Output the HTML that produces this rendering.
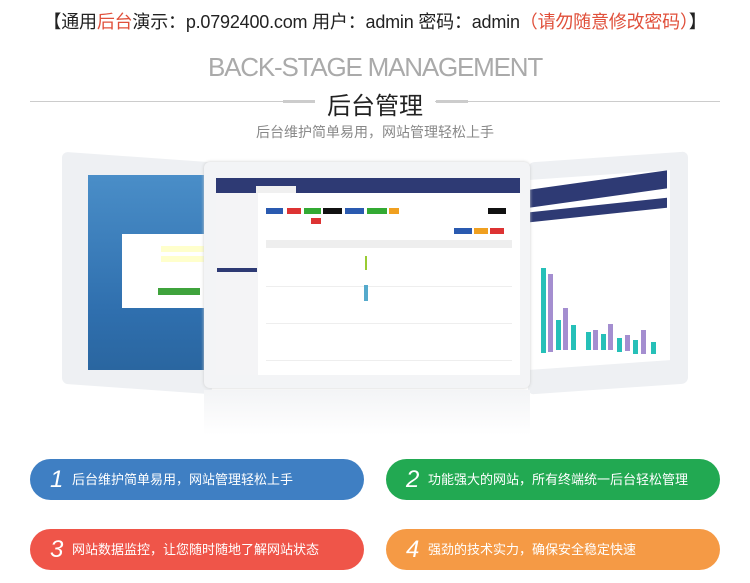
<!DOCTYPE html><html><head><meta charset="utf-8"><style>
body{margin:0;width:750px;height:583px;background:#fff;overflow:hidden;position:relative;font-family:"Liberation Sans","Noto Sans CJK SC",sans-serif}
.a{position:absolute}
.pill{position:absolute;height:41px;border-radius:21px;color:#fff;font-size:13px;line-height:41px;width:334px}
.pill b{font-style:italic;font-size:24px;font-weight:normal;display:inline-block;width:18px;margin-left:20px;margin-right:4px;vertical-align:top}
.row{position:absolute;left:48px;width:258px;height:37px;border-bottom:1px solid #eee;font-size:4px;color:#555}
</style></head><body>
<div class="a" style="left:0;top:8px;width:750px;text-align:center;font-size:18px;color:#222;letter-spacing:-0.2px">【通用<span style="color:#e0503b">后台</span>演示：p.0792400.com 用户：admin 密码：admin<span style="color:#e0503b">（请勿随意修改密码）</span>】</div>
<div class="a" style="left:0;top:52px;width:750px;text-align:center;font-size:26px;color:#aaa;letter-spacing:-1.2px">BACK-STAGE MANAGEMENT</div>
<div class="a" style="left:30px;top:101px;width:690px;height:1px;background:#ccc"></div>
<div class="a" style="left:283px;top:100px;width:32px;height:3px;background:#ccc"></div>
<div class="a" style="left:436px;top:100px;width:32px;height:3px;background:#ccc"></div>
<div class="a" style="left:315px;top:86px;width:120px;background:#fff;text-align:center;font-size:24px;color:#222">后台管理</div>
<div class="a" style="left:0;top:122px;width:750px;text-align:center;font-size:14px;color:#888">后台维护简单易用，网站管理轻松上手</div>

<!-- left screen -->
<div class="a" style="left:62px;top:157px;width:150px;height:232px;background:#eef0f3;border-radius:6px;transform:skewY(4deg)"></div>
<div class="a" style="left:88px;top:175px;width:122px;height:195px;background:linear-gradient(#4a8ec8,#2f6fae 70%,#2a66a0)"></div>
<div class="a" style="left:122px;top:234px;width:90px;height:74px;background:#fff"></div>
<div class="a" style="left:161px;top:246px;width:50px;height:6px;background:#ffffcc"></div>
<div class="a" style="left:161px;top:256px;width:50px;height:6px;background:#ffffcc"></div>
<div class="a" style="left:158px;top:288px;width:42px;height:7px;background:#3fa33c"></div>
<!-- right screen -->
<div class="a" style="left:528px;top:157px;width:160px;height:232px;background:#eef0f3;border-radius:6px;transform:skewY(-4deg)"></div>
<div class="a" style="left:530px;top:175px;width:140px;height:190px;background:#fff;transform:skewY(-4deg)"></div>
<div class="a" style="left:530px;top:180px;width:137px;height:18px;background:#2e3a74;transform:skewY(-8deg)"></div>
<div class="a" style="left:530px;top:205px;width:137px;height:10px;background:#2e3a74;transform:skewY(-6deg)"></div>
<svg class="a" style="left:535px;top:250px" width="135" height="110"><g fill="#26c0b8"><rect x="6" y="18" width="5" height="85"/><rect x="21" y="70" width="5" height="30"/><rect x="36" y="75" width="5" height="25"/><rect x="51" y="82" width="5" height="18"/><rect x="66" y="84" width="5" height="16"/><rect x="82" y="88" width="5" height="14"/><rect x="98" y="90" width="5" height="14"/><rect x="116" y="92" width="5" height="12"/></g><g fill="#a48ed0"><rect x="13" y="24" width="5" height="78"/><rect x="28" y="58" width="5" height="42"/><rect x="58" y="80" width="5" height="20"/><rect x="73" y="74" width="5" height="26"/><rect x="90" y="85" width="5" height="16"/><rect x="106" y="80" width="5" height="24"/></g></svg>
<!-- center screen -->
<div class="a" style="left:204px;top:162px;width:326px;height:226px;background:#f3f4f6;border-radius:6px;box-shadow:0 0 3px #ccc"></div>
<div class="a" style="left:216px;top:178px;width:304px;height:197px;background:#fff"></div>
<div class="a" style="left:216px;top:178px;width:304px;height:15px;background:#2e3a74"></div>
<div class="a" style="left:256px;top:186px;width:40px;height:7px;background:#f0f0f0"></div>
<div class="a" style="left:216px;top:193px;width:42px;height:182px;background:#f4f4f6"></div>
<div class="a" style="left:217px;top:268px;width:40px;height:4px;background:#2e3a74"></div>
<div class="a" style="left:266px;top:208px;width:17px;height:6px;background:#2a5ab0"></div>
<div class="a" style="left:287px;top:208px;width:14px;height:6px;background:#d33"></div>
<div class="a" style="left:304px;top:208px;width:17px;height:6px;background:#3a3"></div>
<div class="a" style="left:323px;top:208px;width:19px;height:6px;background:#111"></div>
<div class="a" style="left:345px;top:208px;width:19px;height:6px;background:#2a5ab0"></div>
<div class="a" style="left:367px;top:208px;width:20px;height:6px;background:#3a3"></div>
<div class="a" style="left:389px;top:208px;width:10px;height:6px;background:#f0a020"></div>
<div class="a" style="left:488px;top:208px;width:18px;height:6px;background:#111"></div>
<div class="a" style="left:311px;top:218px;width:10px;height:6px;background:#d33"></div>
<div class="a" style="left:454px;top:228px;width:18px;height:6px;background:#2a5ab0"></div>
<div class="a" style="left:474px;top:228px;width:14px;height:6px;background:#f0a020"></div>
<div class="a" style="left:490px;top:228px;width:14px;height:6px;background:#d33"></div>
<div class="a" style="left:266px;top:240px;width:246px;height:8px;background:#eee"></div>
<div class="row" style="left:266px;top:249px;width:246px"></div>
<div class="row" style="left:266px;top:286px;width:246px"></div>
<div class="row" style="left:266px;top:323px;width:246px"></div>
<div class="row" style="left:266px;top:345px;width:246px;border:0"></div>
<div class="a" style="left:365px;top:256px;width:2px;height:14px;background:#9c3"></div>
<div class="a" style="left:364px;top:285px;width:4px;height:16px;background:#5ac"></div>
<!-- reflection -->
<div class="a" style="left:204px;top:390px;width:326px;height:45px;background:linear-gradient(#f3f4f6,#fff)"></div>

<div class="pill" style="left:30px;top:459px;background:#3f7fc3"><b>1</b>后台维护简单易用，网站管理轻松上手</div>
<div class="pill" style="left:386px;top:459px;background:#22a952"><b>2</b>功能强大的网站，所有终端统一后台轻松管理</div>
<div class="pill" style="left:30px;top:529px;background:#ef5549"><b>3</b>网站数据监控，让您随时随地了解网站状态</div>
<div class="pill" style="left:386px;top:529px;background:#f59a45"><b>4</b>强劲的技术实力，确保安全稳定快速</div>
</body></html>
